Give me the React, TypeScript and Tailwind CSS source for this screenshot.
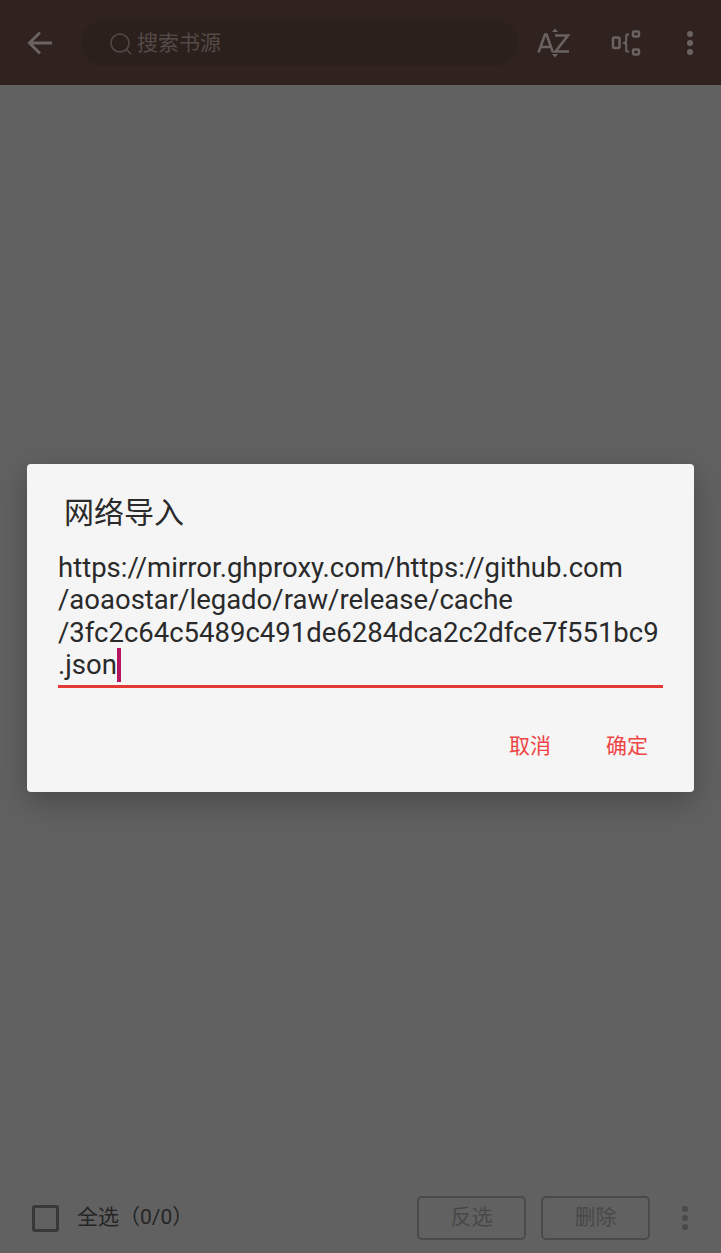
function Dots({ color }: { color: string }) {
  return (
    <div className="flex flex-col items-center gap-[3px]">
      <span className="size-[6px] rounded-full" style={{ backgroundColor: color }} />
      <span className="size-[6px] rounded-full" style={{ backgroundColor: color }} />
      <span className="size-[6px] rounded-full" style={{ backgroundColor: color }} />
    </div>
  );
}

export default function App() {
  const font = { fontFamily: 'Roboto, "Noto Sans CJK SC", sans-serif' };
  return (
    <div style={font} className="relative h-[1253px] w-[721px] overflow-hidden bg-[#616161] flex flex-col">
      <header className="h-[85px] shrink-0 bg-[#2f221f] flex items-center">
        <div className="w-[79px] flex justify-center">
          <svg width="28" height="28" viewBox="0 0 28 28" fill="none" stroke="#6a6361" strokeWidth="3">
            <path d="M26 14H4M14 3.5 3.5 14 14 24.500" />
          </svg>
        </div>
        <div className="ml-[2px] w-[437px] h-[46px] rounded-full bg-[#2c201d] flex items-center pl-[29px]">
          <svg width="22" height="22" viewBox="0 0 22 22" fill="none" stroke="#544b48" strokeWidth="1.500" className="mt-[2px]">
            <circle cx="10" cy="10" r="9" />
            <path d="m16.500 16.500 4.500 4.500" />
          </svg>
          <span className="ml-[5px] mt-[2px] text-[21px] text-[#544b48]">搜索书源</span>
        </div>
        <div className="ml-[19px] w-[34px] flex justify-center">
          <svg width="34" height="32" viewBox="0 0 34 32" fill="none" stroke="#6a6361" strokeWidth="2.500">
            <path d="M1.500 25.500 8 7.500h1.500l6.500 18M4 20h10" />
            <path d="M18 8.500h13L18.500 24.500H32" />
            <path d="M15 5l3-3.500 3 3.500zM15 27l3 3.500 3-3.500z" fill="#6a6361" stroke="none" />
          </svg>
        </div>
        <div className="ml-[40px] w-[30px] flex justify-center">
          <svg width="30" height="28" viewBox="0 0 30 28" fill="none" stroke="#6a6361" strokeWidth="2.500">
            <rect x="2" y="8.500" width="6.500" height="10.500" rx="1.500" />
            <path d="M18 5.500h-1.800a1 1 0 0 0-1 1V13l-2 1 2 1v6.500a1 1 0 0 0 1 1H18" strokeWidth="2" />
            <rect x="22" y="2.500" width="6" height="5" rx="1.200" />
            <rect x="22" y="20.500" width="6" height="5" rx="1.200" />
          </svg>
        </div>
        <div className="ml-[46px]">
          <Dots color="#6a6361" />
        </div>
      </header>

      <main className="flex-1" />

      <footer className="h-[69px] shrink-0 flex items-center pl-[32px] pb-[1px]">
        <span className="size-[27px] rounded-[3px] border-[3px] border-[#383838]" />
        <span className="ml-[18px] text-[21px] text-[#252525]">全选（0/0）</span>
        <button className="ml-auto h-[44px] w-[109px] rounded-[5px] border-2 border-[#4a4a4a] text-[21px] text-[#484848]">反选</button>
        <button className="ml-[15px] mr-[32px] h-[44px] w-[109px] rounded-[5px] border-2 border-[#4a4a4a] text-[21px] text-[#484848]">删除</button>
        <div className="mr-[33px]">
          <Dots color="#4a4a4a" />
        </div>
      </footer>

      <div className="absolute inset-0 flex justify-center items-start pt-[464px]">
        <div className="w-[667px] h-[328px] rounded-[4px] bg-[#f5f5f5] shadow-[0_10px_30px_rgba(0,0,0,0.25)] pt-[30px] pl-[31px] pr-[30px]">
          <h2 className="ml-[6px] text-[30px] leading-[38px] font-normal text-[#2a2a2a]">网络导入</h2>
          <div className="mt-[20px] w-[605px] h-[136px] border-b-[3px] border-[#e53935] text-[27.500px] leading-[32.400px] text-[#2a2a2a]">
            <div>https://mirror.ghproxy.com/https://github.com</div>
            <div>/aoaostar/legado/raw/release/cache</div>
            <div>/3fc2c64c5489c491de6284dca2c2dfce7f551bc9</div>
            <div className="flex items-center">.json<span className="w-[4px] shrink-0 h-[34px] -my-[1px] bg-[#b5155f]" /></div>
          </div>
          <div className="mt-[43px] mr-[16px] flex justify-end gap-[55px] text-[21px] text-[#ee4444]">
            <span>取消</span>
            <span>确定</span>
          </div>
        </div>
      </div>
    </div>
  );
}
